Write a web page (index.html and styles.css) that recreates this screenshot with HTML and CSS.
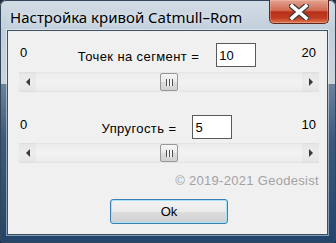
FILE: index.html
```html
<!DOCTYPE html>
<html lang="ru">
<head>
    <meta charset="UTF-8">
    <meta name="viewport" content="width=device-width, initial-scale=1.0">
    <title>Настройка кривой Catmull–Rom</title>
    <link rel="stylesheet" href="styles.css">
</head>
<body>
    <div class="window">
        <div class="titlebar">
            <span class="title">Настройка кривой Catmull–Rom</span>
            <button class="close" aria-label="Закрыть">
                <svg width="20" height="16" viewBox="0 0 20 16">
                    <path d="M3 2 L17 14 M17 2 L3 14" stroke="#3b3b3b" stroke-width="6" stroke-linecap="square"/>
                    <path d="M3 2 L17 14 M17 2 L3 14" stroke="#fff" stroke-width="3.6" stroke-linecap="square"/>
                </svg>
            </button>
        </div>

        <div class="client">
            <div class="field">
                <span class="limit">0</span>
                <div class="group">
                    <label class="caption" for="points">Точек на сегмент =</label>
                    <input id="points" class="value" type="text" value="10">
                </div>
                <span class="limit limit-max">20</span>
            </div>
            <div class="scrollbar">
                <span class="arrow arrow-left"></span>
                <div class="track"><span class="thumb" style="margin-left: calc((100% - 18px) * 0.5)"></span></div>
                <span class="arrow arrow-right"></span>
            </div>

            <div class="field field-second">
                <span class="limit">0</span>
                <div class="group">
                    <label class="caption" for="tension">Упругость =</label>
                    <input id="tension" class="value" type="text" value="5">
                </div>
                <span class="limit limit-max">10</span>
            </div>
            <div class="scrollbar">
                <span class="arrow arrow-left"></span>
                <div class="track"><span class="thumb" style="margin-left: calc((100% - 18px) * 0.5)"></span></div>
                <span class="arrow arrow-right"></span>
            </div>

            <div class="copyright">© 2019-2021 Geodesist</div>

            <div class="actions">
                <button class="ok">Ok</button>
            </div>
        </div>
    </div>
</body>
</html>
```

FILE: styles.css
```css
html, body { margin: 0; background: #1d2b3a; }
body { font-family: "Liberation Sans", Arial, sans-serif; font-size: 13px; color: #000; }

.window { width: 336px; height: 243px; box-sizing: border-box; padding: 0 8px 8px 7px; display: flex; flex-direction: column; border-radius: 6px 6px 4px 4px; background: linear-gradient(to bottom, #d3dce5 0, #c1cfdc 30px, #cbd4dd 84px, #6b829d 84px, #3a597d 140px, #24456b 243px); box-shadow: inset 0 0 0 1px #33465a; }

.titlebar { height: 30px; display: flex; align-items: flex-start; justify-content: space-between; }
.title { padding: 7px 0 0 3px; font-family: "Noto Sans", "Open Sans", sans-serif; font-size: 15px; line-height: 20px; color: #000; text-shadow: 0 0 6px rgba(255,255,255,0.8); }
.close { width: 60px; height: 24px; margin-right: -1px; padding: 0; display: flex; align-items: center; justify-content: center; border: 1px solid #5b2820; border-top: 0; border-radius: 0 0 5px 5px; background: linear-gradient(to bottom, #e3a392 0, #d16b53 45%, #b8301a 52%, #c03b20 78%, #e07852 100%); box-shadow: inset 0 0 0 1px rgba(255,200,180,0.35); }

.client { flex: 1; display: flex; flex-direction: column; background: #f0f0f0; border: 1px solid #3d4f63; box-shadow: 0 0 0 1px rgba(255,255,255,0.45); padding: 12px 8px 0 11px; }

.field { display: grid; grid-template-columns: 1fr auto 1fr; height: 24px; align-items: center; }
.field-second { margin-top: 23px; }
.limit { align-self: start; margin-top: 2px; line-height: 15px; padding-left: 1px; }
.limit-max { text-align: right; padding-right: 3px; }
.group { display: flex; align-items: center; padding-right: 4px; }
.caption { line-height: 15px; margin-top: 2px; letter-spacing: 0.4px; }
.value { width: 40px; height: 24px; box-sizing: border-box; margin-left: 17px; padding: 2px 2px; border: 1px solid #5a5a5a; background: #fff; font: inherit; line-height: 15px; align-self: start; outline: none; }
.field-second .value { margin-left: 16px; }

.scrollbar { display: flex; height: 20px; margin-top: 5px; background: linear-gradient(to bottom, #e2e2e2 0, #ededed 2px, #f2f2f2 50%, #ededed 18px, #e2e2e2 100%); }
.field-second + .scrollbar { margin-top: 4px; }
.arrow { width: 17px; display: flex; align-items: center; justify-content: center; background: rgba(0,0,0,0.025); }
.arrow::before { content: ""; border-top: 4px solid transparent; border-bottom: 4px solid transparent; }
.arrow-left::before { border-right: 4px solid #3a3a3a; }
.arrow-right::before { border-left: 4px solid #3a3a3a; }
.track { flex: 1; display: flex; align-items: center; }
.thumb { width: 18px; height: 18px; box-sizing: border-box; border: 1px solid #979797; border-radius: 2px; background: linear-gradient(to bottom, #f6f6f6 0, #e9e9e9 50%, #dcdcdc 51%, #d2d2d2 100%); display: flex; align-items: center; justify-content: center; }
.thumb::before { content: ""; width: 7px; height: 7px; background: repeating-linear-gradient(to right, #4f4f4f 0, #4f4f4f 1px, #f4f4f4 1px, #f4f4f4 3px); }

.copyright { margin-top: 10px; text-align: right; color: #a3a3a3; line-height: 15px; letter-spacing: 0.3px; }

.actions { display: flex; justify-content: center; margin-top: 11px; }
.ok { width: 118px; height: 25px; padding: 0; border: 1px solid #3c7fb1; border-radius: 3px; background: linear-gradient(to bottom, #f2f2f2 0, #ebebeb 50%, #dddddd 51%, #cfcfcf 100%); box-shadow: inset 0 0 0 1px #a6e2f8; font: inherit; color: #000; }
```
